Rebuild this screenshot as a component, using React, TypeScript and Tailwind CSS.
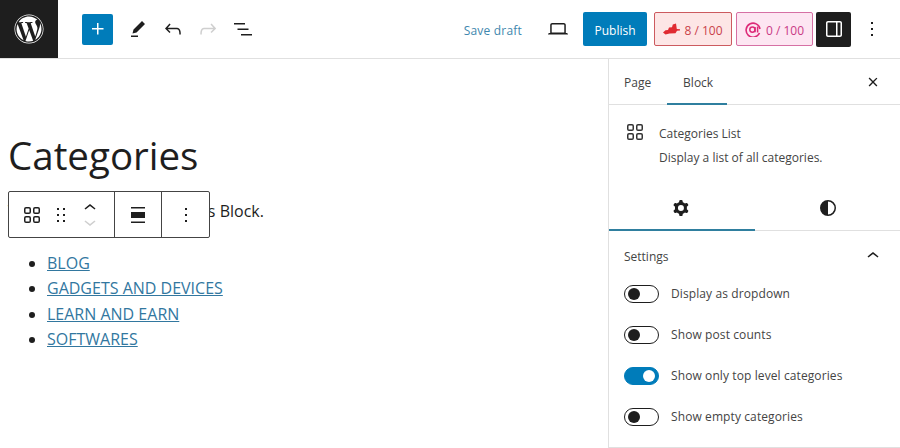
import React from "react";
import { FaWordpress } from "react-icons/fa";

const Icon = ({ d, size = 24, className = "" }: { d: string; size?: number; className?: string }) => (
  <svg viewBox="0 0 24 24" width={size} height={size} fill="currentColor" fillRule="evenodd" className={`shrink-0 ${className}`}>
    <path d={d} />
  </svg>
);

const paths = {
  plus: "M11 12.5V17.5H12.5V12.5H17.5V11H12.5V6H11V11H6V12.5H11Z",
  pencil: "m19 7-3-3-8.5 8.5-1 4 4-1L19 7Zm-7 11.5H5V20h7v-1.5Z",
  undo: "M18.3 11.7c-.6-.6-1.4-.9-2.3-.9H6.7l2.9-3.3-1.1-1-4.5 5L8.5 16l1-1-2.7-2.7H16c.5 0 .9.2 1.3.5 1 1 1 3.4 1 4.5v.3h1.5v-.2c0-1.5 0-4.3-1.5-5.7z",
  redo: "M15.6 6.5l-1.1 1 2.9 3.3H8c-.9 0-1.7.3-2.3.9-1.4 1.5-1.4 4.2-1.4 5.6v.2h1.5v-.3c0-1.1 0-3.5 1-4.5.3-.3.7-.5 1.3-.5h9.2L14.5 15l1.1 1.1 4.6-4.6-4.6-5z",
  list: "M3 6h11v1.5H3V6Zm3.5 5.5h11V13h-11v-1.5ZM21 17H10v1.5h11V17Z",
  laptop: "M20.5 16h-.7V8c0-1.1-.9-2-2-2H6.2c-1.1 0-2 .9-2 2v8h-.7c-.8 0-1.5.7-1.5 1.5h20c0-.8-.7-1.5-1.5-1.5zM5.7 8c0-.3.2-.5.5-.5h11.6c.3 0 .5.2.5.5v7.6H5.7V8z",
  sidebar: "M18 4H6c-1.1 0-2 .9-2 2v12c0 1.1.9 2 2 2h12c1.1 0 2-.9 2-2V6c0-1.1-.9-2-2-2zm-4 14.5H6c-.3 0-.5-.2-.5-.5V6c0-.3.2-.5.5-.5h8v13zm4.5-.5c0 .3-.2.5-.5.5h-2.5v-13H18c.3 0 .5.2.5.5v12z",
  more: "M13 19h-2v-2h2v2zm0-6h-2v-2h2v2zm0-6h-2V5h2v2z",
  close: "M12 13.06l3.712 3.713 1.061-1.06L13.061 12l3.712-3.712-1.06-1.06L12 10.938 8.288 7.227l-1.061 1.06L10.939 12l-3.712 3.712 1.06 1.061L12 13.061z",
  grid: "M6 5.5h3a.5.5 0 01.5.5v3a.5.5 0 01-.5.5H6a.5.5 0 01-.5-.5V6a.5.5 0 01.5-.5zM4 6a2 2 0 012-2h3a2 2 0 012 2v3a2 2 0 01-2 2H6a2 2 0 01-2-2V6zm11-.5h3a.5.5 0 01.5.5v3a.5.5 0 01-.5.5h-3a.5.5 0 01-.5-.5V6a.5.5 0 01.5-.5zM13 6a2 2 0 012-2h3a2 2 0 012 2v3a2 2 0 01-2 2h-3a2 2 0 01-2-2V6zm5 8.5h-3a.5.5 0 00-.5.5v3a.5.5 0 00.5.5h3a.5.5 0 00.5-.5v-3a.5.5 0 00-.5-.5zM15 13a2 2 0 00-2 2v3a2 2 0 002 2h3a2 2 0 002-2v-3a2 2 0 00-2-2h-3zm-9 1.5h3a.5.5 0 01.5.5v3a.5.5 0 01-.5.5H6a.5.5 0 01-.5-.5v-3a.5.5 0 01.5-.5zM4 15a2 2 0 012-2h3a2 2 0 012 2v3a2 2 0 01-2 2H6a2 2 0 01-2-2v-3z",
  drag: "M8 7h2V5H8v2zm0 6h2v-2H8v2zm0 6h2v-2H8v2zm6-14v2h2V5h-2zm0 8h2v-2h-2v2zm0 6h2v-2h-2v2z",
  up: "M6.5 12.4L12 8l5.5 4.4-.9 1.2L12 10l-4.5 3.6-1-1.2z",
  down: "M17.5 11.6L12 16l-5.5-4.4.9-1.2L12 14l4.5-3.6 1 1.2z",
  wide: "M5 9v6h14V9H5zm0-3.5h14V4H5v1.5zM5 20h14v-1.5H5V20z",
  cog: "M10.289 4.836A1 1 0 0111.275 4h1.306a1 1 0 01.987.836l.244 1.466c.787.26 1.503.679 2.108 1.218l1.393-.522a1 1 0 011.216.437l.653 1.13a1 1 0 01-.23 1.273l-1.148.944a6.025 6.025 0 010 2.435l1.149.946a1 1 0 01.23 1.272l-.653 1.13a1 1 0 01-1.216.437l-1.394-.522c-.605.54-1.32.958-2.108 1.218l-.244 1.466a1 1 0 01-.987.836h-1.306a1 1 0 01-.986-.836l-.244-1.466a5.995 5.995 0 01-2.108-1.218l-1.394.522a1 1 0 01-1.217-.436l-.653-1.131a1 1 0 01.23-1.272l1.149-.946a6.026 6.026 0 010-2.435l-1.148-.944a1 1 0 01-.23-1.272l.653-1.131a1 1 0 011.217-.437l1.393.522a5.994 5.994 0 012.108-1.218l.244-1.466zM14.929 12a3 3 0 11-6 0 3 3 0 016 0z",
  contrast: "M12 4a8 8 0 100 16 8 8 0 000-16zm0 1.5a6.5 6.5 0 010 13v-13z",
};

const Toggle = ({ label, on = false }: { label: string; on?: boolean }) => (
  <div className="flex h-[41px] items-center gap-3">
    <span
      className={`flex h-[18px] w-[35px] items-center rounded-full border px-[3px] ${
        on ? "justify-end border-[#007cba] bg-[#007cba]" : "border-[#1e1e1e] bg-white"
      }`}
    >
      <span className={`size-3 rounded-full ${on ? "bg-white" : "bg-[#1e1e1e]"}`} />
    </span>
    <span className="mt-px text-[12px] tracking-[0.1px] text-[#444]">{label}</span>
  </div>
);

export default function App() {
  return (
    <div className="flex h-[448px] w-[900px] flex-col overflow-hidden bg-white font-['Open_Sans',sans-serif] text-[#1e1e1e]">
      {/* top bar */}
      <header className="flex h-[59px] shrink-0 items-center border-b border-[#e0e0e0]">
        <div className="flex h-[58px] w-[58px] shrink-0 items-center justify-center bg-[#1e1e1e] text-white">
          <FaWordpress size={30} />
        </div>
        <div className="ml-6 flex size-[31px] items-center justify-center rounded-[2px] bg-[#007cba] text-white">
          <Icon d={paths.plus} />
        </div>
        <div className="ml-[13px] flex items-center gap-[11px]">
          <Icon d={paths.pencil} />
          <Icon d={paths.undo} />
          <Icon d={paths.redo} className="text-[#cfcfcf]" />
          <Icon d={paths.list} />
        </div>
        <span className="mt-[3px] ml-auto text-[12px] tracking-[0.2px] text-[#3f87ae]">Save draft</span>
        <Icon d={paths.laptop} className="ml-6" />
        <div className="ml-[13px] flex h-[34px] w-16 items-center justify-center rounded-[2px] bg-[#007cba] pt-[3px] text-[12px] text-white">
          Publish
        </div>
        <div className="ml-[7px] flex h-[34px] w-[78px] items-center justify-center gap-1 rounded-[2px] border border-[#cc5a5f] bg-[#fde6e6] text-[12px] text-[#c9424a]">
          <svg viewBox="0 0 17 12" width="17" height="12" fill="#e02b32">
            <path d="M0 9.5 2.5 7.2 5 7l1-2.4 3-.4L9.8 1.4 13 .6l.8 5.4L17 6.2v1.2l-3 .4-1.5 2.4-6 .2L2.5 11.5Z" />
          </svg>
          <span className="pt-[3px]">8 / 100</span>
        </div>
        <div className="ml-1 flex h-[34px] w-[77px] items-center justify-center gap-[5px] rounded-[2px] border border-[#d670a4] bg-[#fde6f2] text-[12px] text-[#c93a85]">
          <svg viewBox="0 0 16 16" width="16" height="16" fill="none" stroke="#dd2a78">
            <path d="M14.5 12A7 7 0 1 1 15 8" strokeWidth="1.6" />
            <circle cx="7.4" cy="8.6" r="2.6" strokeWidth="1.5" />
            <path d="M10 6v5.2M12.6 5.5v6" strokeWidth="1.5" />
          </svg>
          <span className="pt-[3px]">0 / 100</span>
        </div>
        <div className="ml-[3px] flex size-[35px] items-center justify-center rounded-[2px] bg-[#1e1e1e] text-white">
          <Icon d={paths.sidebar} />
        </div>
        <Icon d={paths.more} className="mr-4 ml-[9px]" />
      </header>

      <div className="flex min-h-0 flex-1">
        {/* editor canvas */}
        <main className="relative min-w-0 flex-1 px-2 pt-[70px]">
          <h1 className="text-[38.5px] leading-[52px] text-[#1e1e1e]">Categories</h1>
          <p className="mt-[18px] text-[16px] leading-[24px]">This is the Latest Categories Block.</p>
          <ul className="mt-[28px] list-disc pl-[39px] text-[16px] leading-[25.4px] text-[#32779f]">
            <li className="underline marker:text-[#1e1e1e]">BLOG</li>
            <li className="underline marker:text-[#1e1e1e]">GADGETS AND DEVICES</li>
            <li className="underline marker:text-[#1e1e1e]">LEARN AND EARN</li>
            <li className="underline marker:text-[#1e1e1e]">SOFTWARES</li>
          </ul>

          {/* floating block toolbar */}
          <div className="absolute top-[132px] left-2 flex h-[47px] w-[202px] rounded-[2px] border border-[#444] bg-white">
            <div className="flex w-[106px] items-center border-r border-[#444] pl-[11px]">
              <Icon d={paths.grid} />
              <Icon d={paths.drag} className="ml-[5px]" />
              <div className="ml-[5px] flex flex-col">
                <Icon d={paths.up} className="-mb-[5px]" />
                <Icon d={paths.down} className="-mt-[5px] text-[#cfcfcf]" />
              </div>
            </div>
            <div className="flex w-[47px] items-center justify-center border-r border-[#444]">
              <Icon d={paths.wide} />
            </div>
            <div className="flex flex-1 items-center justify-center">
              <Icon d={paths.more} />
            </div>
          </div>
        </main>

        {/* settings sidebar */}
        <aside className="flex w-[292px] shrink-0 flex-col border-l border-[#e0e0e0] text-[12px] text-[#444]">
          <div className="flex h-[46px] shrink-0 items-stretch border-b border-[#e0e0e0] pl-[15px]">
            <span className="flex items-center pt-[3px]">Page</span>
            <span className="relative ml-[16px] flex w-[60px] items-center justify-center pt-[3px] pl-[2px]">
              Block
              <span className="absolute right-0 -bottom-px left-0 h-[2px] bg-[#2f7f9f]" />
            </span>
            <Icon d={paths.close} size={22} className="mt-3 mr-4 ml-auto text-[#1e1e1e]" />
          </div>
          <div className="flex h-[79px] shrink-0 gap-[12px] pt-[20px] pl-[15px]">
            <Icon d={paths.grid} className="-mt-[5px] -ml-px text-[#333]" />
            <div>
              <div className="leading-[18px]">Categories List</div>
              <div className="mt-[6px] leading-[18px]">Display a list of all categories.</div>
            </div>
          </div>
          <div className="flex h-[47px] shrink-0 border-b border-[#e0e0e0]">
            <div className="relative flex w-[146px] items-center justify-center pt-[2px] pr-[2px] text-[#1e1e1e]">
              <Icon d={paths.cog} />
              <span className="absolute right-0 -bottom-px left-0 h-[2px] bg-[#2f7f9f]" />
            </div>
            <div className="flex flex-1 items-center justify-center pt-[2px] text-[#1e1e1e]">
              <Icon d={paths.contrast} />
            </div>
          </div>
          <div className="flex-1 border-b border-[#e0e0e0] px-[15px]">
            <div className="flex h-[42px] items-center justify-between pt-2">
              <span className="mt-[2px]">Settings</span>
              <Icon d={paths.up} className="text-[#1e1e1e]" />
            </div>
            <Toggle label="Display as dropdown" />
            <Toggle label="Show post counts" />
            <Toggle label="Show only top level categories" on />
            <Toggle label="Show empty categories" />
          </div>
        </aside>
      </div>
    </div>
  );
}
